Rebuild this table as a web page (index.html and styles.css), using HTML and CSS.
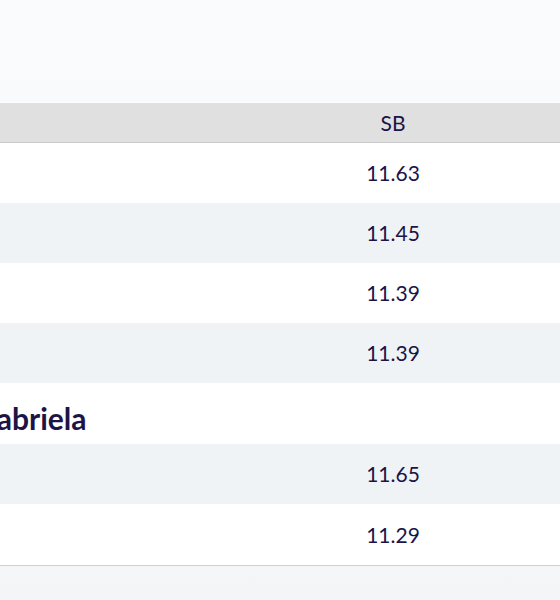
FILE: index.html
```html
<!DOCTYPE html>
<html>
<head>
<meta charset="utf-8">
<link rel="stylesheet" href="styles.css">
</head>
<body>
<div class="page">
  <div class="table-wrap">
    <table class="results">
      <thead>
        <tr>
          <th class="col-name"></th>
          <th class="col-sb">SB</th>
        </tr>
      </thead>
      <tbody>
        <tr class="row"><td class="col-name"></td><td class="col-sb">11.63</td></tr>
        <tr class="row alt"><td class="col-name"></td><td class="col-sb">11.45</td></tr>
        <tr class="row"><td class="col-name"></td><td class="col-sb">11.39</td></tr>
        <tr class="row alt"><td class="col-name"></td><td class="col-sb">11.39</td></tr>
        <tr class="group"><td colspan="2">Gabriela</td></tr>
        <tr class="row alt"><td class="col-name"></td><td class="col-sb">11.65</td></tr>
        <tr class="row last"><td class="col-name"></td><td class="col-sb">11.29</td></tr>
      </tbody>
    </table>
  </div>
</div>
</body>
</html>
```

FILE: styles.css
```css
* { box-sizing: border-box; }
html, body {
  margin: 0;
  padding: 0;
  height: 100%;
}
body {
  background: linear-gradient(to bottom, #fafbfc 0%, #f3f5f7 100%);
  font-family: Lato, "Noto Sans", sans-serif;
  color: #1c1447;
  overflow: hidden;
}
.page {
  padding-top: 102px;
}
.table-wrap {
  overflow: hidden;
  width: 560px;
}
.results {
  margin-left: -30px;
  width: 590px;
  border-collapse: collapse;
  border-top: 1px solid #ffffff;
  border-bottom: 1px solid #cfcfcf;
  table-layout: fixed;
}
.results th {
  background: #e0e0e0;
  height: 40px;
  font-weight: 400;
  font-size: 21px;
  border-bottom: 1px solid #cbcbcb;
  padding: 0;
  text-align: center;
}
.col-name { width: 256px; }
.results td {
  padding: 0;
  font-size: 21px;
  text-align: center;
}
.row td { height: 60px; background: #ffffff; }
.row.alt td { background: #f0f3f6; }
.row.last td { height: 62px; }
.group td {
  height: 61px;
  background: #ffffff;
  text-align: left;
  padding: 10px 0 0 5px;
  font-weight: 700;
  font-size: 30px;
}
```
